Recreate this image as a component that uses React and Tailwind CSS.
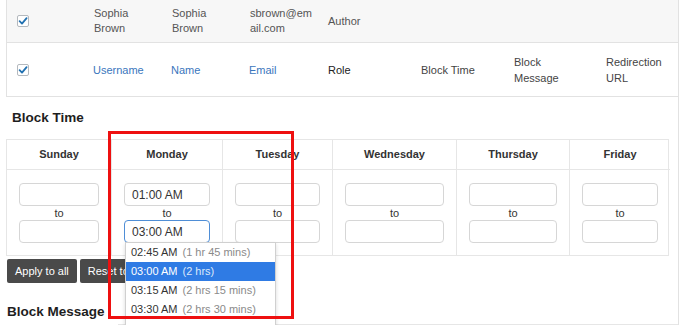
import React from 'react';

const FONT = { fontFamily: '"Liberation Sans", Arial, sans-serif' };

const DAYS = [
  { name: 'Sunday', w: 'w-[104px]' },
  { name: 'Monday', w: 'w-[111px]', from: '01:00 AM', to: '03:00 AM', focus: true },
  { name: 'Tuesday', w: 'w-[110px]' },
  { name: 'Wednesday', w: 'w-[124px]' },
  { name: 'Thursday', w: 'w-[113px]' },
  { name: 'Friday', w: 'w-[101px]' },
];

const OPTIONS = [
  { t: '02:45 AM', d: '(1 hr 45 mins)' },
  { t: '03:00 AM', d: '(2 hrs)', sel: true },
  { t: '03:15 AM', d: '(2 hrs 15 mins)' },
  { t: '03:30 AM', d: '(2 hrs 30 mins)' },
];

function Check() {
  return (
    <span className="flex h-[12px] w-[12px] items-center justify-center rounded-[2px] border border-[#b4b9be] bg-white">
      <svg width="10" height="10" viewBox="0 0 10 10">
        <path d="M1.6 5.2 L4 7.6 L8.6 2.2" fill="none" stroke="#2271b1" strokeWidth="1.8" strokeLinecap="round" strokeLinejoin="round" />
      </svg>
    </span>
  );
}

function TimeInput({ value, focus }) {
  return (
    <div className={`flex h-[23px] w-full items-center rounded-[4px] border bg-white px-[7px] text-[12px] text-[#333] ${focus ? 'border-[#4f8ed6]' : 'border-[#d6d6d6]'}`}>
      {value || ''}
    </div>
  );
}

export default function App() {
  return (
    <div className="relative h-[325px] w-[680px] overflow-hidden bg-white" style={FONT}>
      <div className="h-full w-[679px] border-r border-[#e2e2e2]">
        {/* users table */}
        <div className="ml-[6px] border-b border-l border-[#e2e2e2] text-[11px] leading-[15px]">
          <div className="flex h-[43px] items-center border-b border-[#e2e2e2] bg-[#f7f7f7] text-[#555]">
            <div className="w-[76px] pl-[10px]"><Check /></div>
            <div className="w-[78px] pl-[11px]">Sophia<br />Brown</div>
            <div className="w-[78px] pl-[11px]">Sophia<br />Brown</div>
            <div className="w-[78px] pl-[11px]">sbrown@em<br />ail.com</div>
            <div className="w-[93px] pl-[11px]">Author</div>
          </div>
          <div className="flex h-[53px] items-center leading-[16px]">
            <div className="w-[76px] pl-[10px]"><Check /></div>
            <div className="w-[78px] pl-[10px] text-[#3a76bd]">Username</div>
            <div className="w-[78px] pl-[10px] text-[#3a76bd]">Name</div>
            <div className="w-[78px] pl-[10px] text-[#3a76bd]">Email</div>
            <div className="w-[93px] pl-[11px] text-[#222]">Role</div>
            <div className="w-[93px] pl-[11px] text-[#444]">Block Time</div>
            <div className="w-[93px] pl-[11px] text-[#444]">Block<br />Message</div>
            <div className="pl-[10px] text-[#444]">Redirection<br />URL</div>
          </div>
        </div>

        {/* block time */}
        <div className="flex h-[42px] items-center pl-[12px] text-[13.5px] font-bold text-[#1e1e1e]">Block Time</div>
        <div className="ml-[6px] flex w-[663px] border border-[#e6e6e6]">
          {DAYS.map((d, i) => (
            <div key={d.name} className={`${d.w} shrink-0 ${i > 0 ? 'border-l border-[#e6e6e6]' : ''}`}>
              <div className="flex h-[30px] items-center justify-center border-b border-[#e6e6e6] text-[11px] font-bold text-[#333]">{d.name}</div>
              <div className="flex flex-col items-center px-[12px] pb-[12px] pt-[13px]">
                <TimeInput value={d.from} />
                <div className="h-[14px] text-[11px] leading-[14px] text-[#333]">to</div>
                <TimeInput value={d.to} focus={d.focus} />
              </div>
            </div>
          ))}
        </div>

        <div className="ml-[7px] mt-[3px] flex gap-[3px]">
          <button className="h-[24px] rounded-[2px] bg-[#4a4a4a] px-[8px] text-[11px] text-white">Apply to all</button>
          <button className="h-[24px] w-[47px] overflow-hidden whitespace-nowrap rounded-l-[2px] bg-[#4a4a4a] pl-[8px] text-left text-[11px] text-white">Reset to</button>
        </div>

        <div className="flex h-[42px]">
          <div className="flex w-[118px] items-center pl-[7px] pt-[16px] text-[13.5px] font-bold text-[#1e1e1e]">Block Message</div>
          <div className="flex-1 border-b border-[#e6e6e6]" />
        </div>
      </div>

      {/* open time dropdown */}
      <div className="absolute left-[125px] top-[242px] h-[100px] w-[151px] border border-[#d0d0d0] bg-white text-[11px] shadow-[0_2px_4px_rgba(0,0,0,0.15)]">
        {OPTIONS.map((o) => (
          <div key={o.t} className={`flex h-[19px] items-center gap-[5px] pl-[5px] ${o.sel ? 'bg-[#2f7be4] text-white' : 'text-[#333]'}`}>
            <span>{o.t}</span>
            <span className={o.sel ? 'text-[#dce8fa]' : 'text-[#8a8a8a]'}>{o.d}</span>
          </div>
        ))}
      </div>

      {/* annotation box */}
      <div className="pointer-events-none absolute left-[108px] top-[131px] h-[188px] w-[186px] border-[3px] border-[#ee1010]" />
    </div>
  );
}
